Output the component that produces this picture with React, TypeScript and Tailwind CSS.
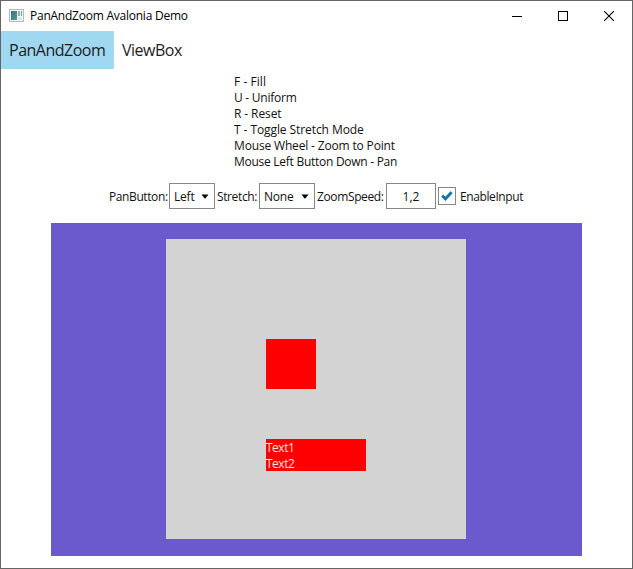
import React from "react";

const shortcuts = [
  { text: "F - Fill", track: "tracking-[0.05px]" },
  { text: "U - Uniform", track: "tracking-[-0.25px]" },
  { text: "R - Reset", track: "tracking-[-0.1px]" },
  { text: "T - Toggle Stretch Mode", track: "tracking-[-0.08px]" },
  { text: "Mouse Wheel - Zoom to Point", track: "tracking-[-0.16px]" },
  { text: "Mouse Left Button Down - Pan", track: "tracking-[-0.27px]" },
];

function Select({ value, width }: { value: string; width: string }) {
  return (
    <button className={`flex h-[26px] ${width} items-center justify-between border border-[#878787] bg-white pr-[5px] pl-1`}>
      <span className="pt-px tracking-[-0.2px]">{value}</span>
      <svg width="8" height="5" viewBox="0 0 8 5">
        <path d="M0.5 0.4H7.5L4.3 4.4H3.7Z" fill="#000" />
      </svg>
    </button>
  );
}

function TitleBar() {
  return (
    <header className="flex h-[30px] items-center pl-2 text-black">
      <svg width="15" height="13" viewBox="0 0 15 13" className="mr-[6px] mb-px">
        <defs>
          <linearGradient id="pane" x1="0" y1="0" x2="1" y2="1">
            <stop offset="0" stopColor="#386f9c" />
            <stop offset="1" stopColor="#4aa37c" />
          </linearGradient>
        </defs>
        <rect x="0.5" y="0.5" width="14" height="12" fill="#f5f5f5" stroke="#b5babd" />
        <rect x="2" y="2" width="6" height="9" fill="url(#pane)" />
        <rect x="9" y="2" width="2" height="5" fill="#8fb3a8" />
        <rect x="12" y="2" width="1" height="5" fill="#7f9f9a" />
        <rect x="9" y="8" width="4" height="3" fill="#e3e6e7" />
      </svg>
      <span className="w-[180px] tracking-[-0.24px]">PanAndZoom Avalonia Demo</span>
      <div className="mb-px ml-auto flex text-black">
        <div className="flex w-[46px] justify-center">
          <svg width="10" height="10" viewBox="0 0 10 10" shapeRendering="crispEdges"><path d="M0 5.5H10" stroke="currentColor" /></svg>
        </div>
        <div className="flex w-[46px] justify-center">
          <svg width="10" height="10" viewBox="0 0 10 10" shapeRendering="crispEdges"><rect x=".5" y=".5" width="9" height="9" fill="none" stroke="currentColor" /></svg>
        </div>
        <div className="flex w-[46px] justify-center">
          <svg width="10" height="10" viewBox="0 0 10 10"><path d="M0 0L10 10M10 0L0 10" stroke="currentColor" strokeWidth="1.1" /></svg>
        </div>
      </div>
    </header>
  );
}

export default function App() {
  return (
    <div className="flex h-[569px] w-[633px] flex-col overflow-hidden border border-[#656565] bg-white font-['Open_Sans','Noto_Sans',sans-serif] text-[12px] leading-4 whitespace-nowrap text-[#111]">
      <TitleBar />
      <nav className="flex h-[38px] text-[16px] text-[#1c1c1c]">
        <div className="flex w-[113px] items-center bg-[#a0d8f1] pl-2 tracking-[-0.5px]">PanAndZoom</div>
        <div className="flex items-center pl-2 tracking-[-0.5px]">ViewBox</div>
      </nav>
      <main className="flex flex-col">
        <div className="mt-[5px] ml-[233px] flex flex-col">
          {shortcuts.map((s) => (
            <span key={s.text} className={s.track}>{s.text}</span>
          ))}
        </div>
        <div className="mt-[13px] ml-[108px] flex h-[26px] items-center">
          <span className="w-[60px] pt-px tracking-[-0.4px]">PanButton:</span>
          <Select value="Left" width="w-[46px]" />
          <span className="ml-[2px] w-[42px] pt-px tracking-[-0.38px]">Stretch:</span>
          <Select value="None" width="w-[56px]" />
          <span className="ml-[2px] w-[69px] pt-px tracking-[-0.37px]">ZoomSpeed:</span>
          <div className="flex h-[26px] w-[50px] items-center justify-center border border-[#878787] pt-px">1,2</div>
          <div className="ml-[2px] flex h-[18px] w-[18px] items-center justify-center border border-[#878787]">
            <svg width="12" height="10" viewBox="0 0 12 10">
              <path d="M1.2 4.6L4.4 7.8L10.6 1.2" fill="none" stroke="#1177a8" strokeWidth="2.9" />
            </svg>
          </div>
          <span className="ml-1 pt-px tracking-[-0.4px]">EnableInput</span>
        </div>
        <div className="mt-[14px] ml-[50px] flex h-[333px] w-[531px] bg-[#6a5acd] pt-4 pl-[115px]">
          <div className="flex h-[300px] w-[300px] flex-col bg-[#d3d3d3] pt-[100px] pl-[100px]">
            <div className="h-[50px] w-[50px] bg-[#ff0000]" />
            <div className="mt-[50px] flex h-8 w-[100px] flex-col bg-[#ff0000] pt-px tracking-[-0.5px] text-[#f5e6e6]">
              <span>Text1</span>
              <span>Text2</span>
            </div>
          </div>
        </div>
      </main>
    </div>
  );
}
